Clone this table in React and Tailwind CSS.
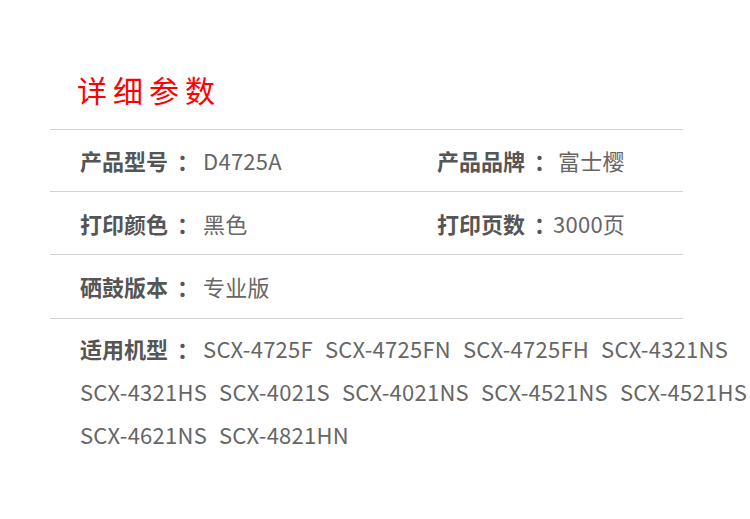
import React from 'react';

const font = { fontFamily: '"Noto Sans CJK SC", "Noto Sans", sans-serif' };

// full-width colon with a narrowed advance so the value can sit close
const Colon = ({ className = '' }) => (
  <span className={`ml-[9px] tracking-[-6px] font-bold text-[#555] ${className}`}>：</span>
);

const Spec = ({ label, value, gap = 'ml-[10px]' }) => (
  <div className="flex items-center whitespace-nowrap">
    <span className="font-bold text-[#555]">{label}</span>
    <Colon />
    <span className={`${gap} text-[#666] tracking-[0.25px]`}>{value}</span>
  </div>
);

const models = [
  ['SCX-4725F', 'SCX-4725FN', 'SCX-4725FH', 'SCX-4321NS'],
  ['SCX-4321HS', 'SCX-4021S', 'SCX-4021NS', 'SCX-4521NS', 'SCX-4521HS'],
  ['SCX-4621NS', 'SCX-4821HN'],
];

export default function App() {
  return (
    <div className="w-[750px] h-[519px] bg-white overflow-hidden" style={font}>
      <div className="pt-[67px] pl-[50px]">
        <h2 className="pl-[27px] text-[30px] leading-[44px] tracking-[6px] text-[#ff0000] h-[62px]">
          详细参数
        </h2>

        <div className="w-[633px] border-t border-[#d3d3d3]">
          <div className="grid grid-cols-[357px_1fr] items-center h-[62px] pl-[30px] text-[22px] border-b border-[#d3d3d3]">
            <Spec label="产品型号" value="D4725A" />
            <Spec label="产品品牌" value="富士樱" gap="ml-[8px]" />
          </div>
          <div className="grid grid-cols-[357px_1fr] items-center h-[63px] pl-[30px] text-[22px] border-b border-[#d3d3d3]">
            <Spec label="打印颜色" value="黑色" />
            <Spec label="打印页数" value="3000页" gap="ml-[3px]" />
          </div>
          <div className="flex items-center h-[64px] pl-[30px] text-[22px] border-b border-[#d3d3d3]">
            <Spec label="硒鼓版本" value="专业版" />
          </div>
        </div>

        <div className="pl-[30px] pt-[8px] text-[22px] leading-[43px] whitespace-nowrap">
          {models.map((line, i) => (
            <div key={i} className="flex items-center">
              {i === 0 && (
                <>
                  <span className="font-bold text-[#555]">适用机型</span>
                  <Colon className="mr-[10px]" />
                </>
              )}
              {line.map((m) => (
                <span key={m} className="text-[#666] tracking-[0.25px] mr-[12px]">{m}</span>
              ))}
            </div>
          ))}
        </div>
      </div>
    </div>
  );
}
